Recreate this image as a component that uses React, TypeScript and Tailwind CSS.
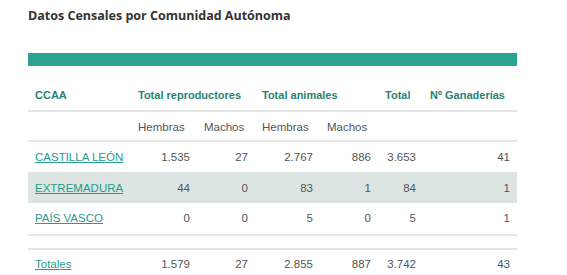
import React from "react";

const rows = [
  { name: "CASTILLA LEÓN", v: ["1.535", "27", "2.767", "886", "3.653", "41"], hl: false },
  { name: "EXTREMADURA", v: ["44", "0", "83", "1", "84", "1"], hl: true },
  { name: "PAÍS VASCO", v: ["0", "0", "5", "0", "5", "1"], hl: false },
];

const widths = [103, 66, 58, 65, 58, 45, 94];

export default function App() {
  return (
    <div className="w-[567px] h-[275px] bg-white overflow-hidden" style={{ fontFamily: '"Liberation Sans", Arial, sans-serif' }}>
      <div className="pl-[28px] pr-[50px]">
        <h1 className="pt-[8px] text-[12.5px] leading-[16px] font-bold text-[#333]" style={{ fontFamily: '"Open Sans", sans-serif' }}>
          Datos Censales por Comunidad Autónoma
        </h1>
        <div className="mt-[29px] h-[13px] bg-[#29a394]" />
        <table className="w-[489px] table-fixed border-collapse text-[11.5px] leading-[14px] whitespace-nowrap">
          <colgroup>
            {widths.map((w, i) => (
              <col key={i} style={{ width: w }} />
            ))}
          </colgroup>
          <thead>
            <tr className="border-b-2 border-[#e6e6e6] font-bold text-[11px] text-[#2a8275]">
              <th className="px-[7px] pt-[22px] pb-[8px] text-left">CCAA</th>
              <th colSpan={2} className="px-[7px] pt-[22px] pb-[8px] text-left">Total reproductores</th>
              <th colSpan={2} className="px-[7px] pt-[22px] pb-[8px] text-left">Total animales</th>
              <th className="px-[7px] pt-[22px] pb-[8px] text-left">Total</th>
              <th className="px-[7px] pt-[22px] pb-[8px] text-left">Nº Ganaderías</th>
            </tr>
            <tr className="border-b-2 border-[#e6e6e6] text-[#555] font-normal">
              <th className="h-[30px] pt-[1px]"></th>
              <th className="px-[7px] pt-[1px] text-left font-normal">Hembras</th>
              <th className="px-[7px] pt-[1px] text-left font-normal">Machos</th>
              <th className="px-[7px] pt-[1px] text-left font-normal">Hembras</th>
              <th className="px-[7px] pt-[1px] text-left font-normal">Machos</th>
              <th></th>
              <th></th>
            </tr>
          </thead>
          <tbody>
            {rows.map((r, i) => (
              <tr key={r.name} className={`${r.hl ? "bg-[#dce5e2]" : ""} ${i === rows.length - 1 ? "border-b-2 border-[#e6e6e6]" : ""}`}>
                <td className={`${i === 2 ? "h-[32px] pb-[1px]" : "h-[31px]"} px-[7px] text-left`}>
                  <a href="#" className="text-[#2a9a8c] underline">{r.name}</a>
                </td>
                {r.v.map((v, j) => (
                  <td key={j} className={`${i === 2 ? "pb-[1px]" : ""} px-[7px] text-right text-[#555]`}>{v}</td>
                ))}
              </tr>
            ))}
            <tr className="border-b-2 border-[#e6e6e6]">
              <td colSpan={7} className="h-[14px]"></td>
            </tr>
            <tr>
              <td className="h-[28px] px-[7px] text-left">
                <a href="#" className="text-[#2a9a8c] underline">Totales</a>
              </td>
              {["1.579", "27", "2.855", "887", "3.742", "43"].map((v, j) => (
                <td key={j} className="px-[7px] text-right text-[#555]">{v}</td>
              ))}
            </tr>
          </tbody>
        </table>
      </div>
    </div>
  );
}
